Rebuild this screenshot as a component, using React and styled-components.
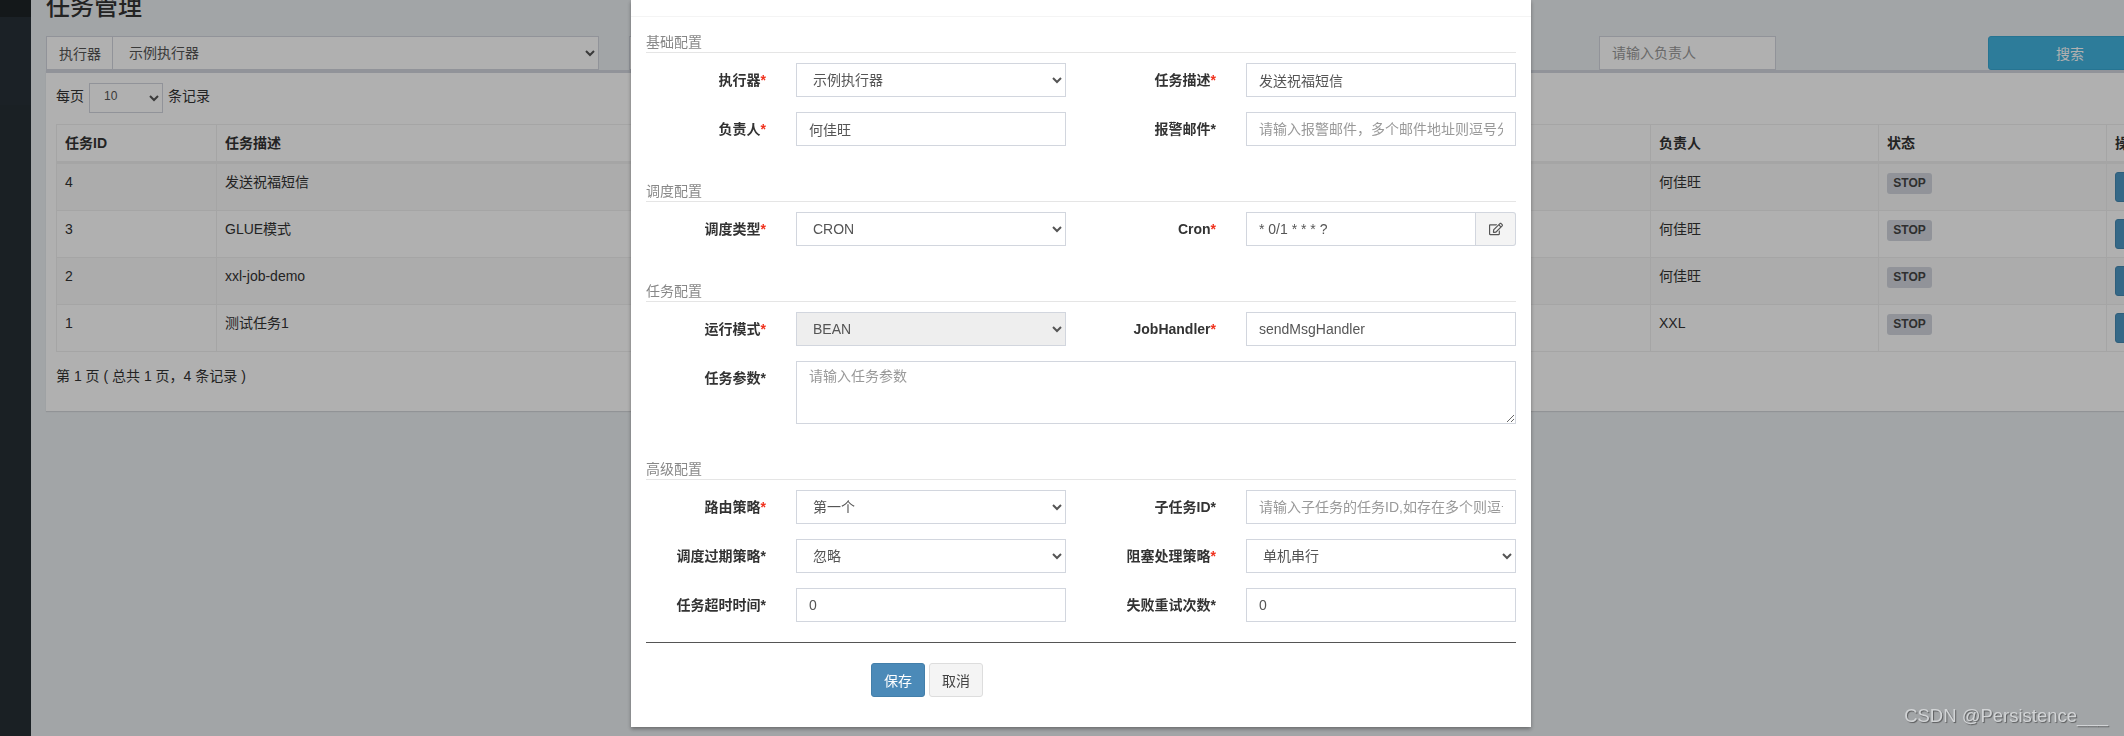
import React from 'react';
import styled, { createGlobalStyle } from 'styled-components';
import { FaRegEdit } from 'react-icons/fa';

const Global = createGlobalStyle`
  html, body { margin: 0; height: 100%; overflow: hidden; background: #ebeff2; }
  body, input, select, textarea, button {
    font-family: "Liberation Sans", "Noto Sans CJK SC", sans-serif;
    font-size: 14px;
  }
  * { box-sizing: border-box; }
`;

const Page = styled.div`
  display: flex;
  width: 2124px;
  height: 736px;
  overflow: hidden;
  background: #ebeff2;
`;
const Sidebar = styled.aside`
  flex: 0 0 31px;
  display: flex;
  flex-direction: column;
  background: #262f35;
`;
const SideBlock = styled.div`
  flex: 0 0 ${p => p.$h}px;
  background: ${p => p.$bg};
`;
const Main = styled.main`
  flex: 0 0 auto;
  width: 2200px;
  padding-left: 15px;
`;
const Title = styled.h1`
  margin: -5px 0 17px;
  font-size: 24px;
  line-height: 24px;
  font-weight: 500;
  color: #333;
`;
const FilterRow = styled.div`
  display: grid;
  grid-template-columns: 583px 970px 389px 164px;
  height: 34px;
`;
const Group = styled.div`
  display: flex;
  width: 553px;
  height: 34px;
`;
const Addon = styled.span`
  flex: 0 0 67px;
  display: flex;
  align-items: center;
  padding-left: 12px;
  background: #fff;
  border: 1px solid #d2d6de;
  color: #555;
`;
const Select = styled.select`
  width: 100%;
  height: 34px;
  padding: 6px 12px;
  background: ${p => (p.disabled ? '#eee' : '#fff')};
  border: 1px solid #d2d6de;
  border-radius: 0;
  color: #555;
  opacity: 1;
  outline: none;
`;
const GroupSelect = styled(Select)`
  flex: 1;
  margin-left: -1px;
`;
const Input = styled.input`
  width: ${p => p.$w || '100%'};
  height: 34px;
  padding: 6px 12px;
  background: #fff;
  border: 1px solid #d2d6de;
  border-radius: 0;
  color: #555;
  outline: none;
  &::placeholder { color: #999; opacity: 1; }
`;
const SearchButton = styled.button`
  width: 164px;
  height: 34px;
  background: #42b4e0;
  border: 1px solid #38a8d4;
  border-radius: 3px;
  color: #fff;
`;
const Box = styled.section`
  border-top: 3px solid #d2d6de;
  background: #fff;
  padding: 10px 10px 25px;
  box-shadow: 0 1px 1px rgba(0, 0, 0, .1);
  color: #333;
`;
const Length = styled.div`
  display: flex;
  align-items: flex-start;
  gap: 5px;
  height: 30px;
  margin-bottom: 11px;
  line-height: 27px;
  color: #333;
`;
const LengthSelect = styled(Select)`
  width: 74px;
  height: 30px;
  padding: 3px 10px 7px;
  font-size: 12px;
`;
const Table = styled.table`
  width: 2170px;
  table-layout: fixed;
  border-collapse: separate;
  border-spacing: 0;
  border-top: 1px solid #f0f0f0;
  border-left: 1px solid #f0f0f0;
`;
const Th = styled.th`
  width: ${p => p.$w}px;
  padding: 8px;
  text-align: left;
  line-height: 20px;
  font-weight: 700;
  border-right: 1px solid #f0f0f0;
  border-bottom: 3px solid #f0f0f0;
`;
const Row = styled.tr`
  background: ${p => (p.$odd ? '#f9f9f9' : '#fff')};
`;
const Td = styled.td`
  height: 47px;
  padding: 8px;
  vertical-align: top;
  line-height: 20px;
  border-right: 1px solid #f0f0f0;
  border-bottom: 1px solid #f0f0f0;
`;
const Badge = styled.span`
  display: block;
  width: 45px;
  height: 21px;
  margin: 1px 0 0 0;
  background: #d2d6de;
  border-radius: 3px;
  color: #444;
  font-size: 12px;
  font-weight: 700;
  line-height: 21px;
  text-align: center;
`;
const RowButton = styled.button`
  display: block;
  width: 70px;
  height: 30px;
  background: #4d97c4;
  border: 1px solid #4589b3;
  border-radius: 3px;
`;
const Footer = styled.div`
  margin-top: 14px;
  line-height: 20px;
`;

const Backdrop = styled.div`
  position: fixed;
  inset: 0;
  background: rgba(0, 0, 0, .31);
`;
const Modal = styled.div`
  position: absolute;
  left: 631px;
  top: 0;
  width: 900px;
  background: #fff;
  box-shadow: 0 2px 4px rgba(0, 0, 0, .35);
  color: #333;
`;
const ModalHead = styled.div`
  height: 17px;
  border-bottom: 1px solid #f4f4f4;
`;
const Form = styled.form`
  padding: 15px 15px 30px;
`;
const Section = styled.fieldset`
  margin: 0 0 35px;
  padding: 0;
  border: 0;
  &:last-of-type { margin-bottom: 0; }
`;
const Legend = styled.div`
  height: 21px;
  margin-bottom: 10px;
  border-bottom: 1px solid #e5e5e5;
  color: #888;
  line-height: 20px;
`;
const FormGrid = styled.div`
  display: grid;
  grid-template-columns: 120px 270px 120px 270px;
  column-gap: 30px;
  row-gap: 15px;
`;
const Label = styled.label`
  align-self: ${p => (p.$top ? 'start' : 'center')};
  padding-top: ${p => (p.$top ? '7px' : '0')};
  text-align: right;
  font-weight: 700;
  line-height: 20px;
  white-space: nowrap;
`;
const Star = styled.span`
  color: ${p => (p.$red ? '#f0321e' : '#333')};
`;
const CronGroup = styled.div`
  display: flex;
  height: 34px;
`;
const CronAddon = styled.span`
  flex: 0 0 40px;
  display: flex;
  align-items: center;
  justify-content: center;
  background: #f4f4f4;
  border: 1px solid #d2d6de;
  border-left: 0;
  border-radius: 0 3px 3px 0;
  color: #555;
  font-size: 14px;
`;
const TextArea = styled.textarea`
  grid-column: 2 / 5;
  height: 63px;
  display: block;
  padding: 4px 12px;
  background: #fff;
  border: 1px solid #d2d6de;
  border-radius: 0;
  line-height: 20px;
  color: #555;
  outline: none;
  &::placeholder { color: #999; opacity: 1; }
`;
const Divider = styled.hr`
  height: 1px;
  margin: 20px 0;
  border: 0;
  background: #555;
`;
const Actions = styled.div`
  display: flex;
  gap: 4px;
  padding-left: 225px;
`;
const ActionButton = styled.button`
  width: 54px;
  height: 34px;
  border-radius: 3px;
  border: 1px solid ${p => (p.$primary ? '#437faa' : '#ddd')};
  background: ${p => (p.$primary ? '#4b8ab8' : '#f4f4f4')};
  color: ${p => (p.$primary ? '#fff' : '#444')};
`;
const Watermark = styled.div`
  position: absolute;
  right: 16px;
  bottom: 9px;
  font-size: 18.5px;
  line-height: 22px;
  color: #d2d4d6;
  text-shadow: 1px 1px 1px rgba(0, 0, 0, .45);
  white-space: nowrap;
`;

const jobs = [
  { id: 4, desc: '发送祝福短信', owner: '何佳旺' },
  { id: 3, desc: 'GLUE模式', owner: '何佳旺' },
  { id: 2, desc: 'xxl-job-demo', owner: '何佳旺' },
  { id: 1, desc: '测试任务1', owner: 'XXL' },
];

const Field = ({ text, red, top }) => (
  <Label $top={top}>
    {text}
    <Star $red={red}>*</Star>
  </Label>
);
const Choice = ({ value, disabled }) => (
  <Select defaultValue={value} disabled={disabled}>
    <option value={value}>{value}</option>
  </Select>
);

export default function App() {
  return (
    <>
      <Global />
      <Page>
        <Sidebar>
          <SideBlock $h={17} $bg="#1d2327" />
          <SideBlock $h={88} $bg="#283137" />
          <SideBlock $h={631} $bg="#262f35" />
        </Sidebar>
        <Main>
          <Title>任务管理</Title>
          <FilterRow>
            <Group>
              <Addon>执行器</Addon>
              <GroupSelect defaultValue="示例执行器">
                <option>示例执行器</option>
              </GroupSelect>
            </Group>
            <Input $w="192px" />
            <Input $w="177px" placeholder="请输入负责人" />
            <SearchButton>搜索</SearchButton>
          </FilterRow>
          <Box>
            <Length>
              每页
              <LengthSelect defaultValue="10">
                <option>10</option>
              </LengthSelect>
              条记录
            </Length>
            <Table>
              <thead>
                <tr>
                  <Th $w={160}>任务ID</Th>
                  <Th $w={1434}>任务描述</Th>
                  <Th $w={228}>负责人</Th>
                  <Th $w={228}>状态</Th>
                  <Th>操作</Th>
                </tr>
              </thead>
              <tbody>
                {jobs.map((job, i) => (
                  <Row key={job.id} $odd={i % 2 === 0}>
                    <Td>{job.id}</Td>
                    <Td>{job.desc}</Td>
                    <Td>{job.owner}</Td>
                    <Td><Badge>STOP</Badge></Td>
                    <Td><RowButton aria-label="操作" /></Td>
                  </Row>
                ))}
              </tbody>
            </Table>
            <Footer>第 1 页 ( 总共 1 页，4 条记录 )</Footer>
          </Box>
        </Main>
        <Backdrop>
          <Modal>
            <ModalHead />
            <Form>
              <Section>
                <Legend>基础配置</Legend>
                <FormGrid>
                  <Field text="执行器" red />
                  <Choice value="示例执行器" />
                  <Field text="任务描述" red />
                  <Input defaultValue="发送祝福短信" />
                  <Field text="负责人" red />
                  <Input defaultValue="何佳旺" />
                  <Field text="报警邮件" />
                  <Input placeholder="请输入报警邮件，多个邮件地址则逗号分隔" />
                </FormGrid>
              </Section>
              <Section>
                <Legend>调度配置</Legend>
                <FormGrid>
                  <Field text="调度类型" red />
                  <Choice value="CRON" />
                  <Field text="Cron" red />
                  <CronGroup>
                    <Input defaultValue="* 0/1 * * * ?" />
                    <CronAddon><FaRegEdit /></CronAddon>
                  </CronGroup>
                </FormGrid>
              </Section>
              <Section>
                <Legend>任务配置</Legend>
                <FormGrid>
                  <Field text="运行模式" red />
                  <Choice value="BEAN" disabled />
                  <Field text="JobHandler" red />
                  <Input defaultValue="sendMsgHandler" />
                  <Field text="任务参数" top />
                  <TextArea placeholder="请输入任务参数" />
                </FormGrid>
              </Section>
              <Section>
                <Legend>高级配置</Legend>
                <FormGrid>
                  <Field text="路由策略" red />
                  <Choice value="第一个" />
                  <Field text="子任务ID" />
                  <Input placeholder="请输入子任务的任务ID,如存在多个则逗号分隔" />
                  <Field text="调度过期策略" />
                  <Choice value="忽略" />
                  <Field text="阻塞处理策略" red />
                  <Choice value="单机串行" />
                  <Field text="任务超时时间" />
                  <Input defaultValue="0" />
                  <Field text="失败重试次数" />
                  <Input defaultValue="0" />
                </FormGrid>
              </Section>
              <Divider />
              <Actions>
                <ActionButton type="button" $primary>保存</ActionButton>
                <ActionButton type="button">取消</ActionButton>
              </Actions>
            </Form>
          </Modal>
          <Watermark>CSDN @Persistence___</Watermark>
        </Backdrop>
      </Page>
    </>
  );
}
